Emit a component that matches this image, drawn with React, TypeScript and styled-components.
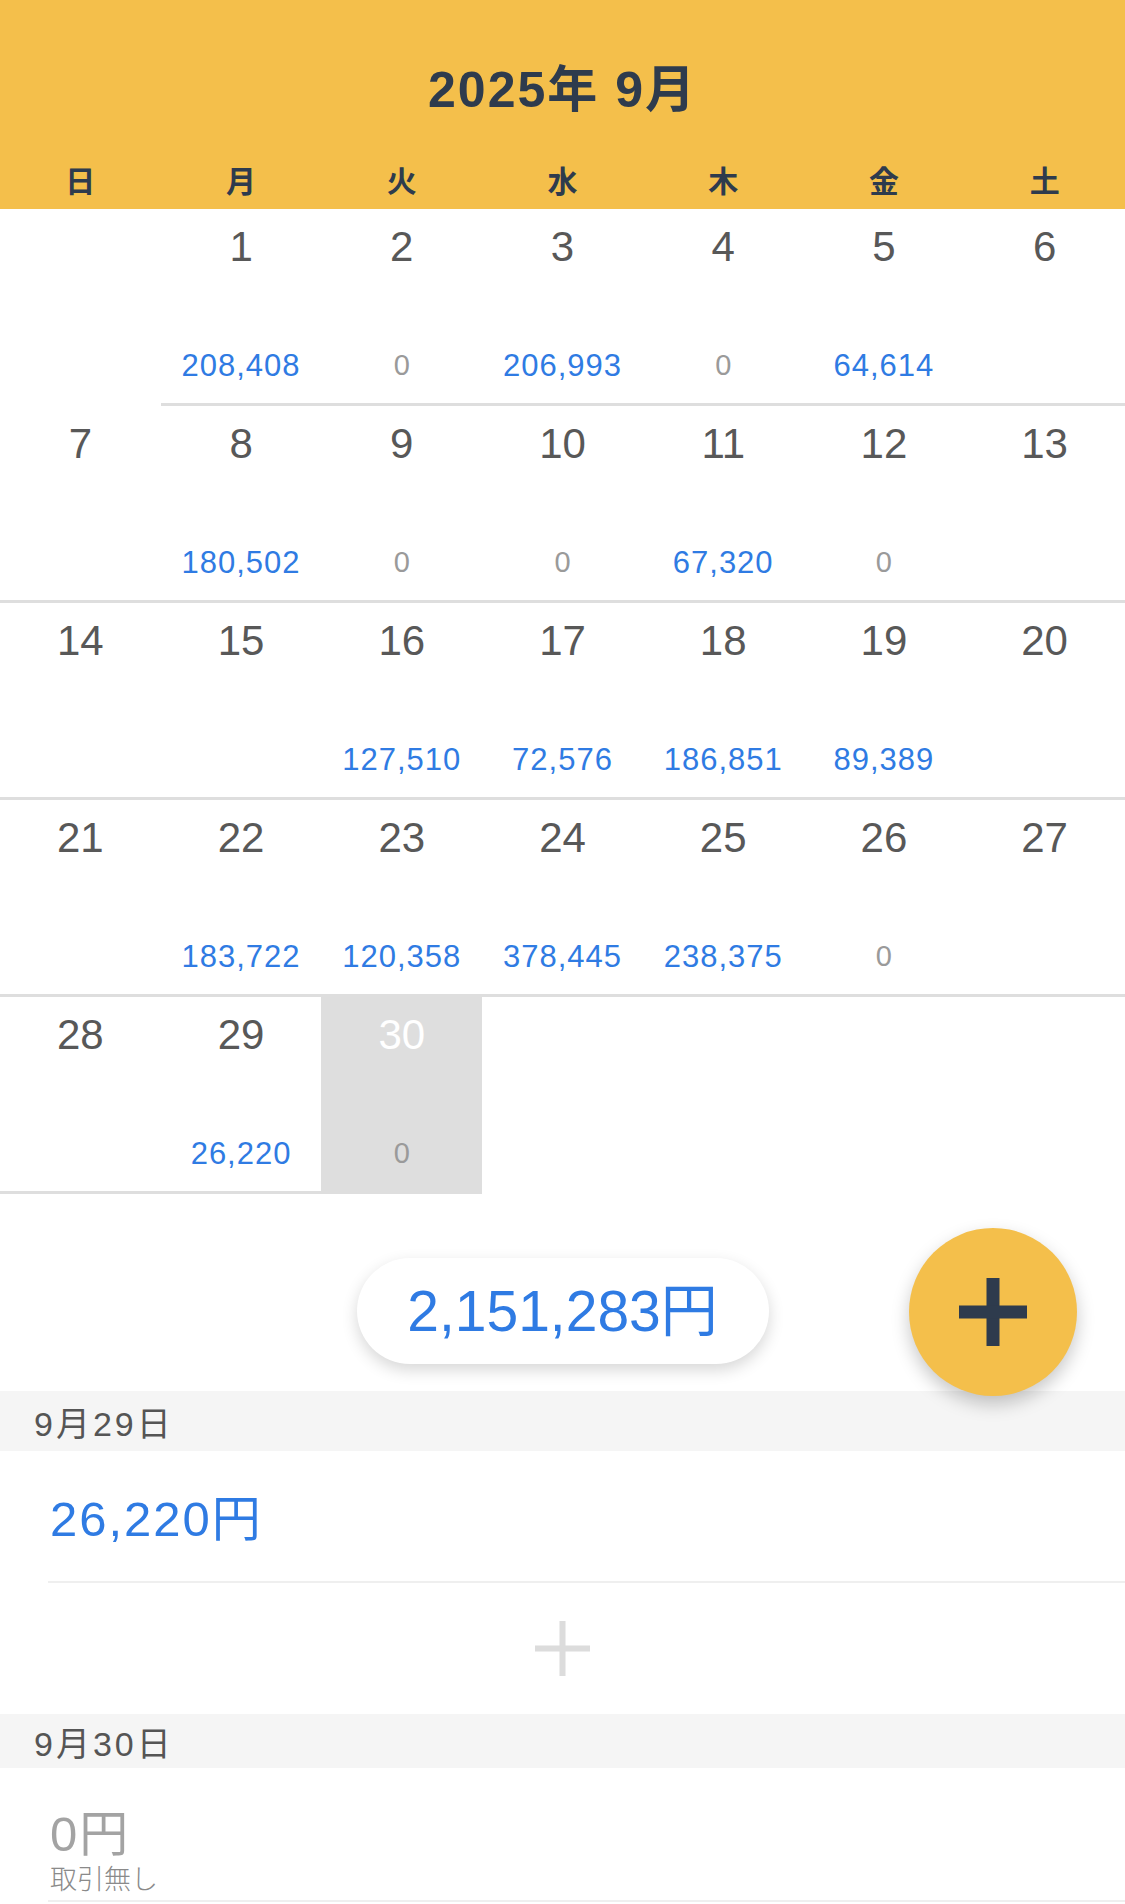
import React from "react";
import styled, { createGlobalStyle } from "styled-components";

const GlobalStyle = createGlobalStyle`
  html, body {
    margin: 0;
    padding: 0;
    background: #ffffff;
  }
  body {
    font-family: "Liberation Sans", "Noto Sans CJK JP", sans-serif;
    overflow: hidden;
  }
`;

const YELLOW = "#F4BF4B";
const INK = "#2E3B4D";
const BLUE = "#2F7BE3";

const Page = styled.div`
  width: 1125px;
  position: relative;
`;

const Header = styled.header`
  background: ${YELLOW};
  height: 209px;
  box-sizing: border-box;
  padding-top: 65px;
  display: flex;
  flex-direction: column;
`;

const Title = styled.h1`
  margin: 0;
  text-align: center;
  font-size: 50px;
  line-height: 50px;
  font-weight: 700;
  letter-spacing: 2px;
  color: ${INK};
`;

const WeekRow = styled.div`
  margin-top: 52px;
  display: grid;
  grid-template-columns: repeat(7, 1fr);
`;

const WeekDay = styled.div`
  text-align: center;
  font-size: 30px;
  line-height: 30px;
  font-weight: 700;
  color: ${INK};
`;

const Grid = styled.div`
  display: grid;
  grid-template-columns: repeat(7, 1fr);
  grid-auto-rows: 197px;
`;

const Cell = styled.div<{ $blank?: boolean; $selected?: boolean }>`
  box-sizing: border-box;
  display: flex;
  flex-direction: column;
  align-items: center;
  padding-top: 17px;
  background: ${(p) => (p.$selected ? "#DEDEDE" : "#ffffff")};
  border-bottom: 3px solid ${(p) => (p.$blank ? "transparent" : "#DEDEDE")};
`;

const DayNum = styled.span<{ $selected?: boolean }>`
  font-size: 42px;
  line-height: 42px;
  color: ${(p) => (p.$selected ? "#ffffff" : "#585858")};
`;

const DayAmount = styled.span<{ $zero?: boolean }>`
  margin-top: 82px;
  font-size: ${(p) => (p.$zero ? "29px" : "31px")};
  line-height: 31px;
  letter-spacing: ${(p) => (p.$zero ? "0" : "1px")};
  color: ${(p) => (p.$zero ? "#9A9A9A" : BLUE)};
`;

const SummaryBar = styled.div`
  position: relative;
  height: 197px;
  box-sizing: border-box;
  padding-top: 64px;
  display: flex;
  justify-content: center;
  align-items: flex-start;
`;

const TotalPill = styled.div`
  width: 412px;
  height: 106px;
  border-radius: 53px;
  background: #ffffff;
  box-shadow: 0 6px 16px rgba(0, 0, 0, 0.16);
  display: flex;
  align-items: center;
  justify-content: center;
  font-size: 57px;
  line-height: 57px;
  color: ${BLUE};
`;

const Fab = styled.button`
  position: absolute;
  right: 48px;
  top: 34px;
  z-index: 2;
  width: 168px;
  height: 168px;
  border: none;
  border-radius: 50%;
  padding: 0;
  background: ${YELLOW};
  box-shadow: 0 8px 18px rgba(0, 0, 0, 0.22);
  display: flex;
  align-items: center;
  justify-content: center;
`;

const DateHeader = styled.div<{ $h: number }>`
  height: ${(p) => p.$h}px;
  background: #F5F5F5;
  display: flex;
  align-items: center;
  padding-left: 34px;
  font-size: 34px;
  letter-spacing: 3px;
  color: #555555;
`;

const Entry = styled.div<{ $pad: string }>`
  margin-left: 48px;
  padding: ${(p) => p.$pad};
  padding-left: 2px;
  border-bottom: 2px solid #EFEFEF;
`;

const EntryAmount = styled.div<{ $empty?: boolean }>`
  font-size: 49px;
  line-height: 49px;
  letter-spacing: 2px;
  color: ${(p) => (p.$empty ? "#A3A3A3" : BLUE)};
`;

const EntryNote = styled.div`
  margin-top: 8px;
  font-size: 27px;
  line-height: 27px;
  font-weight: 300;
  color: #8A8A8A;
`;

const AddRow = styled.div`
  height: 131px;
  display: flex;
  align-items: center;
  justify-content: center;
`;

type Day = { n?: number; amount?: number; selected?: boolean };

const weeks: Day[][] = [
  [{}, { n: 1, amount: 208408 }, { n: 2, amount: 0 }, { n: 3, amount: 206993 }, { n: 4, amount: 0 }, { n: 5, amount: 64614 }, { n: 6 }],
  [{ n: 7 }, { n: 8, amount: 180502 }, { n: 9, amount: 0 }, { n: 10, amount: 0 }, { n: 11, amount: 67320 }, { n: 12, amount: 0 }, { n: 13 }],
  [{ n: 14 }, { n: 15 }, { n: 16, amount: 127510 }, { n: 17, amount: 72576 }, { n: 18, amount: 186851 }, { n: 19, amount: 89389 }, { n: 20 }],
  [{ n: 21 }, { n: 22, amount: 183722 }, { n: 23, amount: 120358 }, { n: 24, amount: 378445 }, { n: 25, amount: 238375 }, { n: 26, amount: 0 }, { n: 27 }],
  [{ n: 28 }, { n: 29, amount: 26220 }, { n: 30, amount: 0, selected: true }, {}, {}, {}, {}],
];

const weekLabels = ["日", "月", "火", "水", "木", "金", "土"];

const fmt = (v: number) => v.toLocaleString("en-US");

const PlusIcon = ({ size, stroke, color }: { size: number; stroke: number; color: string }) => (
  <svg width={size} height={size} viewBox={`0 0 ${size} ${size}`}>
    <rect x={(size - stroke) / 2} y={0} width={stroke} height={size} fill={color} />
    <rect x={0} y={(size - stroke) / 2} width={size} height={stroke} fill={color} />
  </svg>
);

const App: React.FC = () => {
  return (
    <Page>
      <GlobalStyle />
      <Header>
        <Title>2025年 9月</Title>
        <WeekRow>
          {weekLabels.map((w) => (
            <WeekDay key={w}>{w}</WeekDay>
          ))}
        </WeekRow>
      </Header>

      <Grid>
        {weeks.flat().map((d, i) =>
          d.n === undefined ? (
            <Cell key={i} $blank />
          ) : (
            <Cell key={i} $selected={d.selected}>
              <DayNum $selected={d.selected}>{d.n}</DayNum>
              {d.amount !== undefined && (
                <DayAmount $zero={d.amount === 0}>{fmt(d.amount)}</DayAmount>
              )}
            </Cell>
          )
        )}
      </Grid>

      <SummaryBar>
        <TotalPill>2,151,283円</TotalPill>
        <Fab aria-label="追加">
          <PlusIcon size={68} stroke={13} color={INK} />
        </Fab>
      </SummaryBar>

      <DateHeader $h={60}>9月29日</DateHeader>
      <Entry $pad="44px 0 37px">
        <EntryAmount>26,220円</EntryAmount>
      </Entry>
      <AddRow>
        <PlusIcon size={55} stroke={6} color="#DCDCDC" />
      </AddRow>

      <DateHeader $h={54}>9月30日</DateHeader>
      <Entry $pad="42px 0 6px">
        <EntryAmount $empty>0円</EntryAmount>
        <EntryNote>取引無し</EntryNote>
      </Entry>
    </Page>
  );
};

export default App;
